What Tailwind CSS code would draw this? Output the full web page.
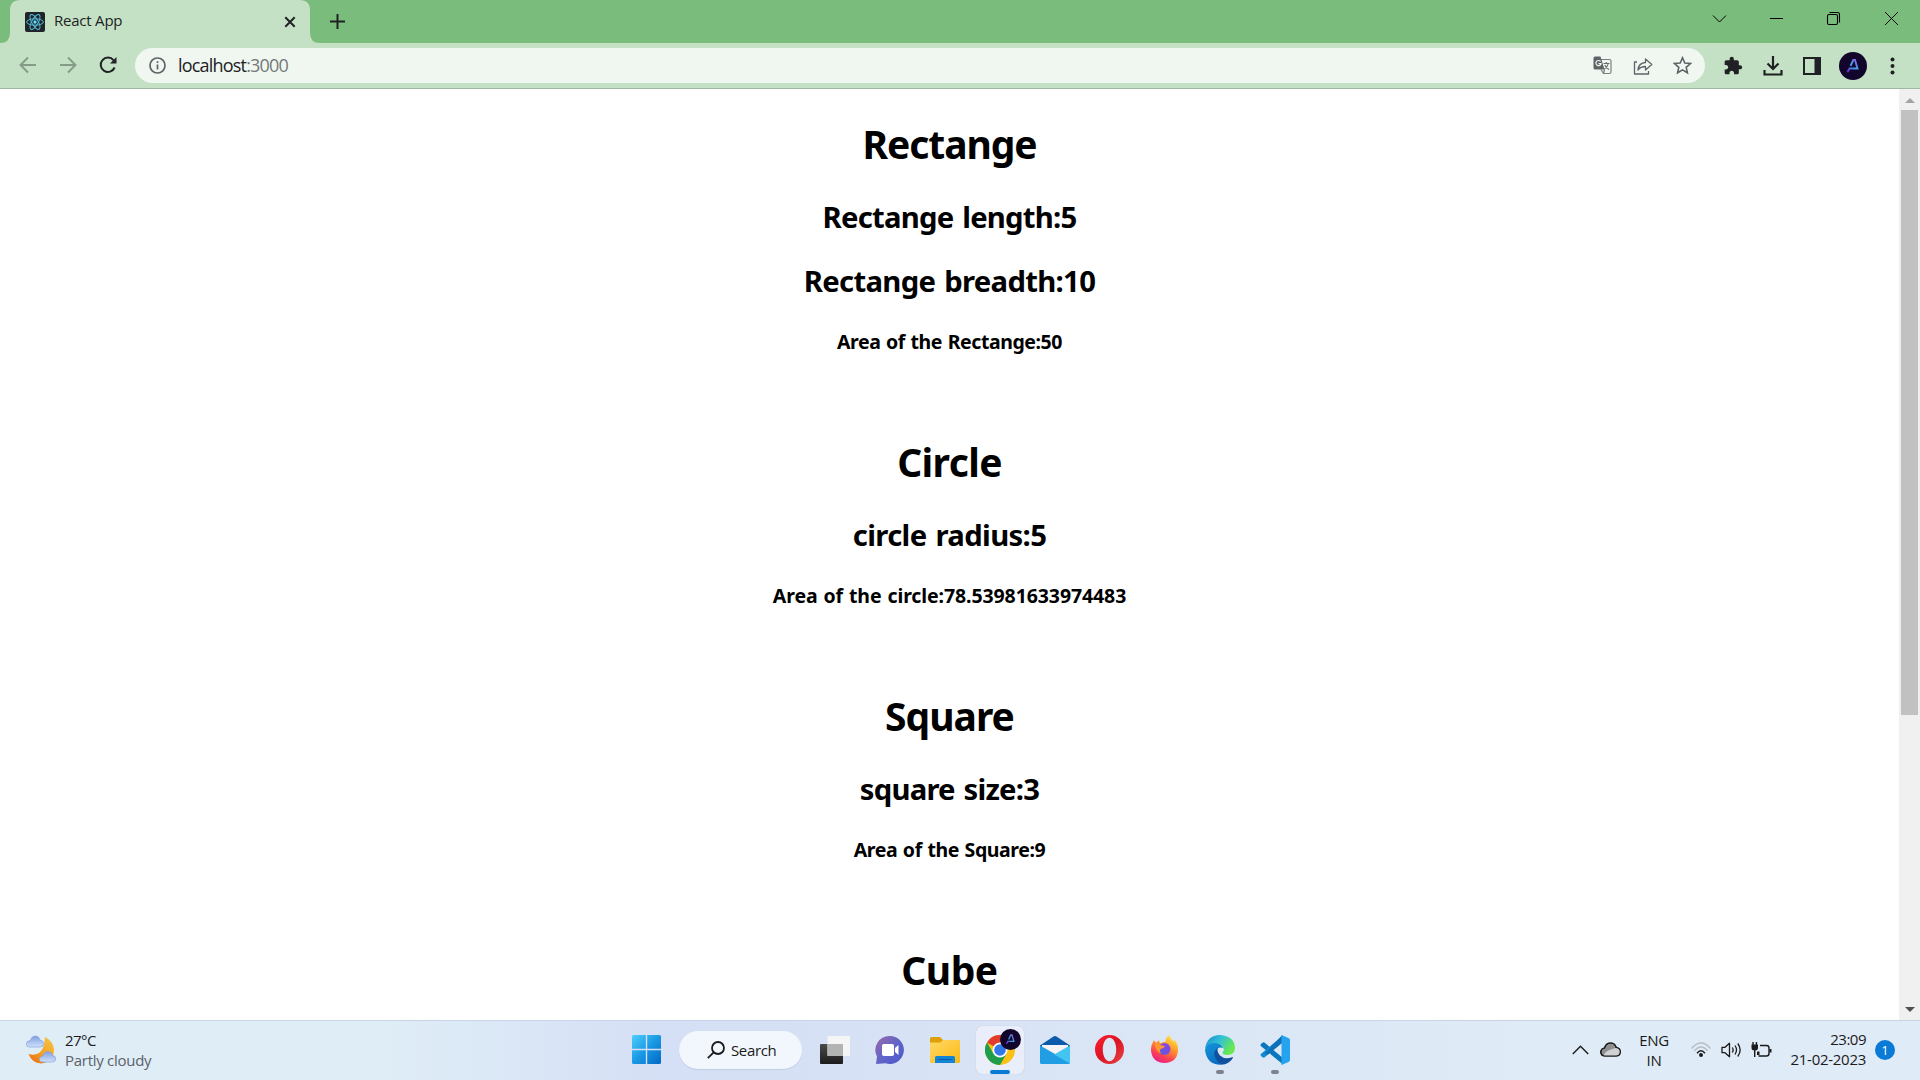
<!DOCTYPE html>
<html lang="en">
<head>
<meta charset="utf-8">
<title>React App</title>
<script src="https://cdn.jsdelivr.net/npm/@tailwindcss/browser@4"></script>
</head>
<body class="flex h-screen w-screen flex-col overflow-hidden bg-white font-['Open_Sans','Noto_Sans',sans-serif] text-[#202124]">

<!-- Tab strip -->
<header class="flex h-[43px] shrink-0 bg-[#7abc7c]">
  <svg class="h-[43px] w-[320px] shrink-0 -mr-[320px]" viewBox="0 0 320 43" fill="#c5e1c5"><path d="M0 43Q10 43 10 33V10Q10 0 20 0H300Q310 0 310 10V33Q310 43 320 43Z"/></svg>
  <div class="relative ml-[25px] flex w-[285px] items-center">
    <svg class="size-5" viewBox="0 0 20 20"><rect width="20" height="20" rx="2" fill="#20232a"/><g fill="none" stroke="#53bdd6" stroke-width="1"><ellipse cx="10" cy="10" rx="8.4" ry="3.2"/><ellipse cx="10" cy="10" rx="8.4" ry="3.2" transform="rotate(60 10 10)"/><ellipse cx="10" cy="10" rx="8.4" ry="3.2" transform="rotate(120 10 10)"/></g><circle cx="10" cy="10" r="1.7" fill="#61dafb"/></svg>
    <span class="ml-[9px] pb-[3px] text-[15px] leading-5 tracking-[-0.22px]">React App</span>
    <svg class="ml-auto mr-[14px] size-3" viewBox="0 0 12 12" fill="none" stroke="#202124" stroke-width="2"><path d="M1.3 1.3l9.4 9.4M10.700 1.300l-9.400 9.400"/></svg>
  </div>
  <div class="flex w-[55px] items-center justify-center"><svg class="size-[15px]" viewBox="0 0 15 15" fill="none" stroke="#202124" stroke-width="2"><path d="M7.500 0v15M0 7.500h15"/></svg></div>
  <div class="ml-auto mr-px flex h-[37px] items-center text-black">
    <div class="flex w-[57px] justify-center"><svg class="size-[15px]" viewBox="0 0 15 15" fill="none" stroke="currentColor" stroke-width="1"><path d="M1 4.500l6.500 6.500 6.500-6.500"/></svg></div>
    <div class="flex w-[57px] justify-center"><svg class="size-[15px]" viewBox="0 0 15 15" fill="none" stroke="currentColor"><path d="M1 7.500h13"/></svg></div>
    <div class="flex w-[57px] justify-center"><svg class="size-[15px]" viewBox="0 0 15 15" fill="none" stroke="currentColor" stroke-width="1.100"><rect x="1.500" y="3.500" width="10" height="10" rx="1.500"/><path d="M3.500 1.500H11.500Q13.500 1.500 13.500 3.500V11.500"/></svg></div>
    <div class="flex w-[57px] justify-center"><svg class="ml-px size-[15px]" viewBox="0 0 15 15" fill="none" stroke="currentColor" stroke-width="1"><path d="M1 1l13 13M14 1L1 14"/></svg></div>
  </div>
</header>

<!-- Toolbar -->
<nav class="flex h-[46px] shrink-0 items-center border-b border-[#a0b8a1] bg-[#c5e1c5]">
  <div class="flex w-[135px] items-center pb-px pl-[19px]">
    <svg class="size-[18px]" viewBox="0 0 18 18" fill="none" stroke="#859a87" stroke-width="1.900"><path d="M17 9H2M9 1.500L1.500 9 9 16.500"/></svg>
    <svg class="ml-[22px] size-[18px]" viewBox="0 0 18 18" fill="none" stroke="#859a87" stroke-width="1.900"><path d="M1 9h15M9 1.500L16.500 9 9 16.500"/></svg>
    <svg class="ml-[22px] size-[18px]" viewBox="0 0 18 18" fill="none" stroke="#202124" stroke-width="2"><path d="M15.600 11.500A7.200 7.200 0 1 1 14.500 4.200"/><path d="M17.500 1V7.500H11Z" fill="#202124" stroke="none"/></svg>
  </div>
  <div class="flex h-[35px] w-[1570px] items-center rounded-full bg-[#f0f7f0] pl-[14px]">
    <svg class="size-[17px]" viewBox="0 0 17 17" fill="none" stroke="#5f6368" stroke-width="1.700"><circle cx="8.500" cy="8.500" r="7.500"/><path d="M8.500 7.500v5M8.500 4.200v1.900"/></svg>
    <span class="ml-3 pb-px text-[18px] leading-6 tracking-[-0.81px]">localhost<span class="text-[#73797a]">:3000</span></span>
    <svg class="ml-auto size-[19px]" viewBox="0 0 19 19"><path d="M8 3.500H16.500Q18 3.500 18 5V16Q18 17.500 16.500 17.500H10.500L8 13.500" fill="none" stroke="#7b8082" stroke-width="1.200"/><path d="M2 .5H7.500L11.500 13.500H2Q.5 13.500 .5 12V2Q.5 .5 2 .5Z" fill="#5f6368"/><path d="M7.600 5.500A2.600 2.600 0 1 0 8.100 7.600H5.600" fill="none" stroke="#f0f7f0" stroke-width="1.200"/><path d="M10.500 7.500h6M13.300 6v1.500M15.300 7.500Q14.500 11 11.500 13M11.800 9Q13 12 16 13.500M11.500 13.500L10.500 17.500" fill="none" stroke="#686d70" stroke-width="1.100"/></svg>
    <svg class="ml-[21px] size-[20px]" viewBox="0 0 20 20" fill="none" stroke="#5f6368" stroke-width="1.300" stroke-linejoin="round"><path d="M4 6H1.500V18H15.500V15"/><path d="M5 14Q5.500 7 12.500 6.500V3L18.800 8.500 12.500 14V10.500Q7.500 10.500 5 14Z"/></svg>
    <svg class="ml-[20px] mr-[13px] size-[19px]" viewBox="0 0 19 19" fill="none" stroke="#5f6368" stroke-width="1.600"><path d="M9.500 1.800L11.800 7 17.400 7.500 13.200 11.300 14.400 16.800 9.500 13.900 4.600 16.800 5.800 11.300 1.600 7.500 7.200 7Z"/></svg>
  </div>
  <div class="flex w-[215px] items-center">
    <svg class="ml-[18px] size-[20px]" viewBox="0 0 24 24" fill="#202124"><path d="M20.500 11H19V7c0-1.100-.9-2-2-2h-4V3.500C13 2.120 11.880 1 10.500 1S8 2.120 8 3.500V5H4c-1.100 0-2 .9-2 2v3.800h1.500c1.490 0 2.700 1.210 2.700 2.700s-1.210 2.700-2.700 2.700H2V20c0 1.100.9 2 2 2h3.800v-1.500c0-1.490 1.210-2.700 2.700-2.700s2.700 1.210 2.700 2.700V22H17c1.100 0 2-.9 2-2v-4h1.500c1.380 0 2.500-1.120 2.500-2.500S21.880 11 20.500 11z"/></svg>
    <svg class="ml-5 size-[20px]" viewBox="0 0 20 20" fill="none" stroke="#202124" stroke-width="2.200"><path d="M10 0V13M4.500 7.500L10 13 15.500 7.500M1.500 14V18.500H18.500V14"/></svg>
    <svg class="ml-5 size-[18px]" viewBox="0 0 18 18"><path d="M1 1H17V17H1Z" fill="none" stroke="#202124" stroke-width="2"/><path d="M11.500 1H17V17H11.500Z" fill="#202124"/></svg>
    <svg class="ml-[18px] size-[28px]" viewBox="0 0 28 28"><defs><linearGradient id="neon" x1="0" y1="1" x2="1" y2="0"><stop stop-color="#7a22c9"/><stop offset=".55" stop-color="#37a8ee"/><stop offset="1" stop-color="#9a51dc"/></linearGradient></defs><circle cx="14" cy="14" r="14" fill="#12052b"/><path d="M8.500 20L10.500 16.500L18.500 16.500L16 8H14.300L11.500 14" fill="none" stroke="url(#neon)" stroke-width="1.900"/></svg>
    <svg class="ml-[23px] h-[18px] w-[5px]" viewBox="0 0 5 18" fill="#202124"><circle cx="2.500" cy="2.500" r="2"/><circle cx="2.500" cy="9" r="2"/><circle cx="2.500" cy="15.500" r="2"/></svg>
  </div>
</nav>

<!-- Page -->
<div class="flex min-h-0 flex-1">
  <main class="flex-1 overflow-hidden whitespace-nowrap pt-7 text-center font-['Noto_Sans','Open_Sans',sans-serif] font-bold text-black">
    <section class="mb-20">
      <h1 class="mb-[27px] text-[39px] leading-[53px] tracking-[-1.1px]">Rectange</h1>
      <h2 class="mb-6 text-[29.25px] leading-10 tracking-[-0.76px] [word-spacing:2px]">Rectange length:5</h2>
      <h2 class="mb-[27px] text-[29.25px] leading-10 tracking-[-0.68px] [word-spacing:2px]">Rectange breadth:10</h2>
      <h4 class="text-[19.5px] leading-[27px] tracking-[-0.43px] [word-spacing:1px]">Area of the Rectange:50</h4>
    </section>
    <section class="mb-20">
      <h1 class="mb-[27px] text-[39px] leading-[53px] tracking-[-0.62px]">Circle</h1>
      <h2 class="mb-[27px] text-[29.25px] leading-10 tracking-[-0.64px] [word-spacing:2px]">circle radius:5</h2>
      <h4 class="text-[19.5px] leading-[27px] tracking-[-0.1px] [word-spacing:1px]">Area of the circle:78.53981633974483</h4>
    </section>
    <section class="mb-20">
      <h1 class="mb-[27px] text-[39px] leading-[53px] tracking-[-1px]">Square</h1>
      <h2 class="mb-[27px] text-[29.25px] leading-10 tracking-[-0.78px] [word-spacing:2px]">square size:3</h2>
      <h4 class="text-[19.5px] leading-[27px] tracking-[-0.42px] [word-spacing:1px]">Area of the Square:9</h4>
    </section>
    <section>
      <h1 class="text-[39px] leading-[53px] tracking-[-0.5px]">Cube</h1>
    </section>
  </main>
  <div class="flex w-[21px] flex-col items-center bg-[#f0f0f0]">
    <svg class="h-[21px] w-[10px]" viewBox="0 0 10 21" fill="#a3a3a3"><path d="M0 14L5 9l5 5z"/></svg>
    <div class="h-[605px] w-[17px] bg-[#c1c1c1]"></div>
    <svg class="mt-auto h-[21px] w-[10px]" viewBox="0 0 10 21" fill="#505050"><path d="M0 8l5 5 5-5z"/></svg>
  </div>
</div>

<!-- Taskbar -->
<footer class="flex h-[60px] shrink-0 items-center border-t border-[#c9d5e6] bg-linear-to-r from-[#dfedf7] from-20% via-[#d5dff5] via-35% to-[#dfebf6] to-80% pb-[2px] text-[#1b1b1b]">
  <div class="flex w-[619px] items-center pl-[26px]">
    <svg class="size-[30px]" viewBox="0 0 30 30"><defs><linearGradient id="moon" x1="1" y1="0" x2=".3" y2="1"><stop stop-color="#f5c643"/><stop offset=".6" stop-color="#f4a428"/><stop offset="1" stop-color="#ee7512"/></linearGradient><linearGradient id="cl" x1="0" y1="0" x2="0" y2="1"><stop stop-color="#7f9ede"/><stop offset="1" stop-color="#cfe1fa"/></linearGradient></defs><path d="M19 2Q27 6 28 14Q28 27 15 28.500Q6 28 2.500 19Q18 23 19 2Z" fill="url(#moon)"/><g fill="url(#cl)" stroke="#86a3dc" stroke-width=".7"><path d="M4 12Q0 12 .4 8.500Q1 5.500 4.200 5.800Q5.500 1 9.500 1Q13 1 14 5Q17.600 5.500 17.600 8.500Q17.500 12 14 12Z"/><path d="M17 27Q13 27 13.400 23.500Q14 21 17 21Q18 16.500 22 16.500Q25.500 16.500 26.500 20.500Q29.700 20.800 29.700 24Q29.600 27 26 27Z"/></g></svg>
    <div class="ml-[9px] text-[15px] leading-5">
      <p class="tracking-[-0.53px]">27°C</p>
      <p class="tracking-[-0.28px] text-[#5b6167]">Partly cloudy</p>
    </div>
  </div>
  <div class="flex items-center">
    <div class="flex w-[55px] justify-center"><svg class="size-[29px]" viewBox="0 0 29 29"><defs><linearGradient id="win" x1="0" y1="0" x2="29" y2="29" gradientUnits="userSpaceOnUse"><stop stop-color="#4cd0fb"/><stop offset=".5" stop-color="#1a98e4"/><stop offset="1" stop-color="#0069c5"/></linearGradient></defs><path fill="url(#win)" d="M1.500 0H13.800V13.800H0V1.500Q0 0 1.500 0ZM15.200 0H27.500Q29 0 29 1.500V13.800H15.200ZM0 15.200H13.800V29H1.500Q0 29 0 27.500ZM15.200 15.200H29V27.500Q29 29 27.500 29H15.200Z"/></svg></div>
    <div class="mx-[5px] flex h-[38px] w-[123px] items-center rounded-full bg-[#f2f6fd] pl-[28px] shadow-[0_1px_1px_#c3cde2]">
      <svg class="size-[18px]" viewBox="0 0 18 18" fill="none" stroke="#1b1b1b" stroke-width="1.800"><circle cx="11" cy="7" r="6"/><path d="M6.700 11.300L.8 17.200"/></svg>
      <span class="ml-1.5 text-[15px] leading-5 tracking-[-0.36px]">Search</span>
    </div>
    <div class="flex w-[55px] justify-center"><svg class="size-[30px]" viewBox="0 0 30 30"><defs><linearGradient id="tv" x1="0" y1="0" x2="0" y2="1"><stop stop-color="#4a4a4a"/><stop offset="1" stop-color="#1c1c1c"/></linearGradient></defs><rect y="9" width="23" height="20" rx="1" fill="url(#tv)"/><rect x="7.500" y="1" width="22.500" height="20" rx="1" fill="#f5f5f5"/><path d="M7.500 9H23V21H7.500Z" fill="#b2b3b3"/></svg></div>
    <div class="flex w-[55px] justify-center"><svg class="size-[30px]" viewBox="0 0 30 30"><defs><linearGradient id="chat" x1="0" y1="0" x2="1" y2="1"><stop stop-color="#9b6aa8"/><stop offset=".5" stop-color="#6264c8"/><stop offset="1" stop-color="#4a59cc"/></linearGradient></defs><path d="M15 1A14 14 0 1 1 10.500 28.300L1 29L2 21.500A14 14 0 0 1 15 1Z" fill="url(#chat)"/><rect x="7" y="9" width="12" height="12" rx="1.800" fill="#fff"/><path d="M20 13L23.500 10V20L20 17Z" fill="#fff"/></svg></div>
    <div class="flex w-[55px] justify-center"><svg class="size-[30px]" viewBox="0 0 30 30"><defs><linearGradient id="fold" x1="0" y1="0" x2="1" y2="1"><stop stop-color="#ffd966"/><stop offset="1" stop-color="#fcb914"/></linearGradient></defs><path d="M0 3.500Q0 2 1.500 2H10L13 5H28.500Q30 5 30 6.500V12H0Z" fill="#dfa007"/><path d="M0 7.500H10.500L13 5H29Q30 5 30 6.500V27Q30 28 28.500 28H1.500Q0 28 0 27Z" fill="url(#fold)"/><path d="M5 28V22.500Q5 21 6.500 21H23.500Q25 21 25 22.500V28Z" fill="#1184d7"/><path d="M8.500 24.500h13" stroke="#0c5a9f"/></svg></div>
    <div class="flex w-[55px] justify-center">
      <div class="relative flex h-[48px] w-[48px] items-center justify-center rounded-md bg-[#eaeefa] shadow-[0_0_1px_#a9b2cb]">
        <svg class="size-[30px]" viewBox="0 0 30 30"><circle cx="15" cy="15" r="15" fill="#fbc116"/><path d="M15 15L2 7.500A15 15 0 0 1 28 7.500H15Z" fill="#e33b2e"/><path d="M2 7.500A15 15 0 0 0 15 30L21.500 18.700L15 15L8.500 18.700Z" fill="#1f9d4c"/><circle cx="15" cy="15" r="7.500" fill="#fff"/><circle cx="15" cy="15" r="5.800" fill="#3179ea"/></svg>
        <svg class="absolute right-[3px] top-[3px] size-[21px]" viewBox="0 0 28 28"><circle cx="14" cy="14" r="14" fill="#12052b"/><path d="M8.500 20L10.500 16.500L18.500 16.500L16 8H14.300L11.500 14" fill="none" stroke="url(#neon)" stroke-width="1.700"/></svg>
        <div class="absolute bottom-0 h-1 w-5 rounded-full bg-[#0a7ad7]"></div>
      </div>
    </div>
    <div class="flex w-[55px] justify-center"><svg class="size-[30px]" viewBox="0 0 30 30"><path d="M0 10.500L13.500 1.500Q15 .6 16.500 1.500L30 10.500V18H0Z" fill="#0b5cab"/><path d="M2 10H28V20L15 24 2 20Z" fill="#f5f5f5"/><path d="M0 10.500L30 27.500Q30 29 28.500 29H1.500Q0 29 0 27.500Z" fill="#209de3"/><path d="M30 10.500L14 19.500 30 28.500Z" fill="#43c5f2"/></svg></div>
    <div class="flex w-[55px] justify-center"><svg class="size-[29px]" viewBox="0 0 29 29"><defs><linearGradient id="op" x1="0" y1="0" x2="1" y2="1"><stop stop-color="#fd1d31"/><stop offset=".5" stop-color="#db1524"/><stop offset="1" stop-color="#ea4548"/></linearGradient></defs><path fill-rule="evenodd" fill="url(#op)" d="M14.500 0A14.500 14.500 0 1 1 14.500 29A14.500 14.500 0 1 1 14.500 0ZM14.500 2.800C10.500 2.800 7.800 8 7.800 14.500S10.500 26.200 14.500 26.200 21.200 21 21.200 14.500 18.500 2.800 14.500 2.800Z"/></svg></div>
    <div class="flex w-[55px] justify-center"><svg class="size-[29px]" viewBox="0 0 30 30"><defs><linearGradient id="ff" x1=".8" y1="0" x2=".3" y2="1"><stop stop-color="#fff044"/><stop offset=".4" stop-color="#ff9b28"/><stop offset=".75" stop-color="#fb4154"/><stop offset="1" stop-color="#e5208a"/></linearGradient><linearGradient id="ffp" x1="1" y1="0" x2="0" y2="1"><stop stop-color="#963ce8"/><stop offset="1" stop-color="#5263db"/></linearGradient></defs><path d="M2.800 8L4 5.500 6.500 8 9 5.500 10.500 8.500Q14 7 16 7Q16 3 20 0Q21 4 24.500 7L25 4.500Q29.500 10 29 16Q28 28.500 15 29Q2 28.500 1 15.500Q1 11 2.800 8Z" fill="url(#ff)"/><circle cx="15" cy="14.500" r="6.200" fill="url(#ffp)"/><path d="M5 9Q9 7 11 10.500L15.500 11.500Q14 14 11 14.500Q9 17 12 19Q6 18 5 9Z" fill="#ff9630"/></svg></div>
    <div class="relative flex w-[55px] justify-center"><svg class="size-[30px]" viewBox="0 0 30 30"><defs><linearGradient id="ed" x1="0" y1="0" x2="1" y2=".5"><stop stop-color="#1787d2"/><stop offset=".5" stop-color="#32c1d6"/><stop offset="1" stop-color="#69e94e"/></linearGradient><linearGradient id="ed2" x1="0" y1="0" x2=".6" y2="1"><stop stop-color="#1398db"/><stop offset="1" stop-color="#0a6bc0"/></linearGradient></defs><path d="M0 14Q2 0 15 0Q29 1 30 12Q30 20 22.500 20Q17.500 20 17.500 17.500L19 15Q18 8.500 9 8.500Q3 9 0 14Z" fill="url(#ed)"/><path d="M0 15Q1 8.500 8.500 8Q16 8 18 13Q12 11 11 18Q11 25 18 29.700Q2 31 0 15Z" fill="url(#ed2)"/><path d="M12.500 13Q7.500 17 10.500 23Q13.500 29.500 19 29.400Q25 28 28 22.800Q28 21.800 27 22.200Q20 25 15 20.500Q12 17 12.500 13Z" fill="#10509e"/></svg><div class="absolute -bottom-[9px] h-1 w-2 rounded-full bg-[#7d828e]"></div></div>
    <div class="relative flex w-[55px] justify-center"><svg class="size-[30px]" viewBox="0 0 30 30"><path d="M1.500 8.500L3 7.500Q4 7 5 8L23 23V29.500L.8 11Q0 9.800 1.500 8.500Z" fill="#0a76bd"/><path d="M1.500 21.500L3 22.500Q4 23 5 22L23 7V.5L.8 19Q0 20.200 1.500 21.500Z" fill="#1389d1"/><path d="M4.500 18.500L22 .5V8L8 19.500Z" fill="#0a70b8"/><path d="M21.500 0L28.500 3Q30 3.800 30 5V25Q30 26.200 28.500 27L21.500 30Z" fill="#26a3ee"/></svg><div class="absolute -bottom-[9px] h-1 w-2 rounded-full bg-[#7d828e]"></div></div>
  </div>
  <div class="ml-auto flex items-center pr-[25px] text-[15px] leading-5">
    <svg class="h-[10px] w-[17px]" viewBox="0 0 17 10" fill="none" stroke="#1b1b1b" stroke-width="1.400"><path d="M.8 9L8.500 1.300 16.200 9"/></svg>
    <svg class="ml-[11px] h-[15px] w-[21px]" viewBox="0 0 21 15" stroke="#1b1b1b" stroke-width="1.200"><path d="M5 14Q1 14 .8 10Q1 6.500 4.500 6Q6 1 10.500 1Q15 1 16.200 5.500Q20.300 6 20.300 10Q20 14 16 14Z" fill="#8f8f8f"/><path d="M3.500 13.900Q5 9.500 9.500 8L16.200 5.700Q20.200 6.200 20.200 10Q20 13.900 16 13.900Z" fill="#d0d1d2" stroke="none"/><path d="M5 14Q1 14 .8 10Q1 6.500 4.500 6Q6 1 10.500 1Q15 1 16.200 5.500Q20.300 6 20.300 10Q20 14 16 14Z" fill="none"/></svg>
    <div class="ml-[17px] w-8 text-center tracking-[-0.31px]"><p>ENG</p><p>IN</p></div>
    <svg class="ml-[21px] h-[16px] w-[20px]" viewBox="0 0 20 16" fill="none" stroke-width="1.400"><path d="M.5 6.500Q10-4.500 19.500 6.500M3.300 9Q10 1 16.700 9" stroke="#b4bcc4"/><path d="M6 11.300Q10 6.300 14 11.300" stroke="#1b1b1b"/><circle cx="10" cy="13" r="2" fill="#1b1b1b"/></svg>
    <svg class="ml-[10px] h-[16px] w-[21px]" viewBox="0 0 21 16" fill="none" stroke="#1b1b1b" stroke-width="1.300" stroke-linejoin="round"><path d="M1 5.300H4L8.500 1.200V14.800L4 10.700H1ZM11.300 5.500Q13 8 11.300 10.500M14 3.500Q17 8 14 12.500M16.800 1.500Q21.500 8 16.800 14.500"/></svg>
    <svg class="ml-[9px] h-[18px] w-[21px]" viewBox="0 0 21 18" fill="none" stroke="#1b1b1b" stroke-width="1.400"><path d="M9 4.500H15.500Q18 4.500 18 7V12.500Q18 15 15.500 15H7.500"/><path d="M18.500 8H20.500V11.500H18.500Z" fill="#1b1b1b" stroke="none"/><path d="M.5 3.500H7V7Q7 9.500 3.700 9.500Q.5 9.500 .5 7ZM1.300 1H2.700V4H1.300ZM4.700 1H6.100V4H4.700ZM6 10.500H8.500V14H6Z" fill="#1b1b1b" stroke="none"/><path d="M3.700 9V16"/></svg>
    <div class="w-[94px] pb-[2px] text-right"><p class="tracking-[-0.5px]">23:09</p><p class="tracking-[-0.28px]">21-02-2023</p></div>
    <div class="ml-[9px] flex size-5 items-center justify-center rounded-full bg-[#0a7ad7] text-[13px] text-white">1</div>
  </div>
</footer>
</body>
</html>
